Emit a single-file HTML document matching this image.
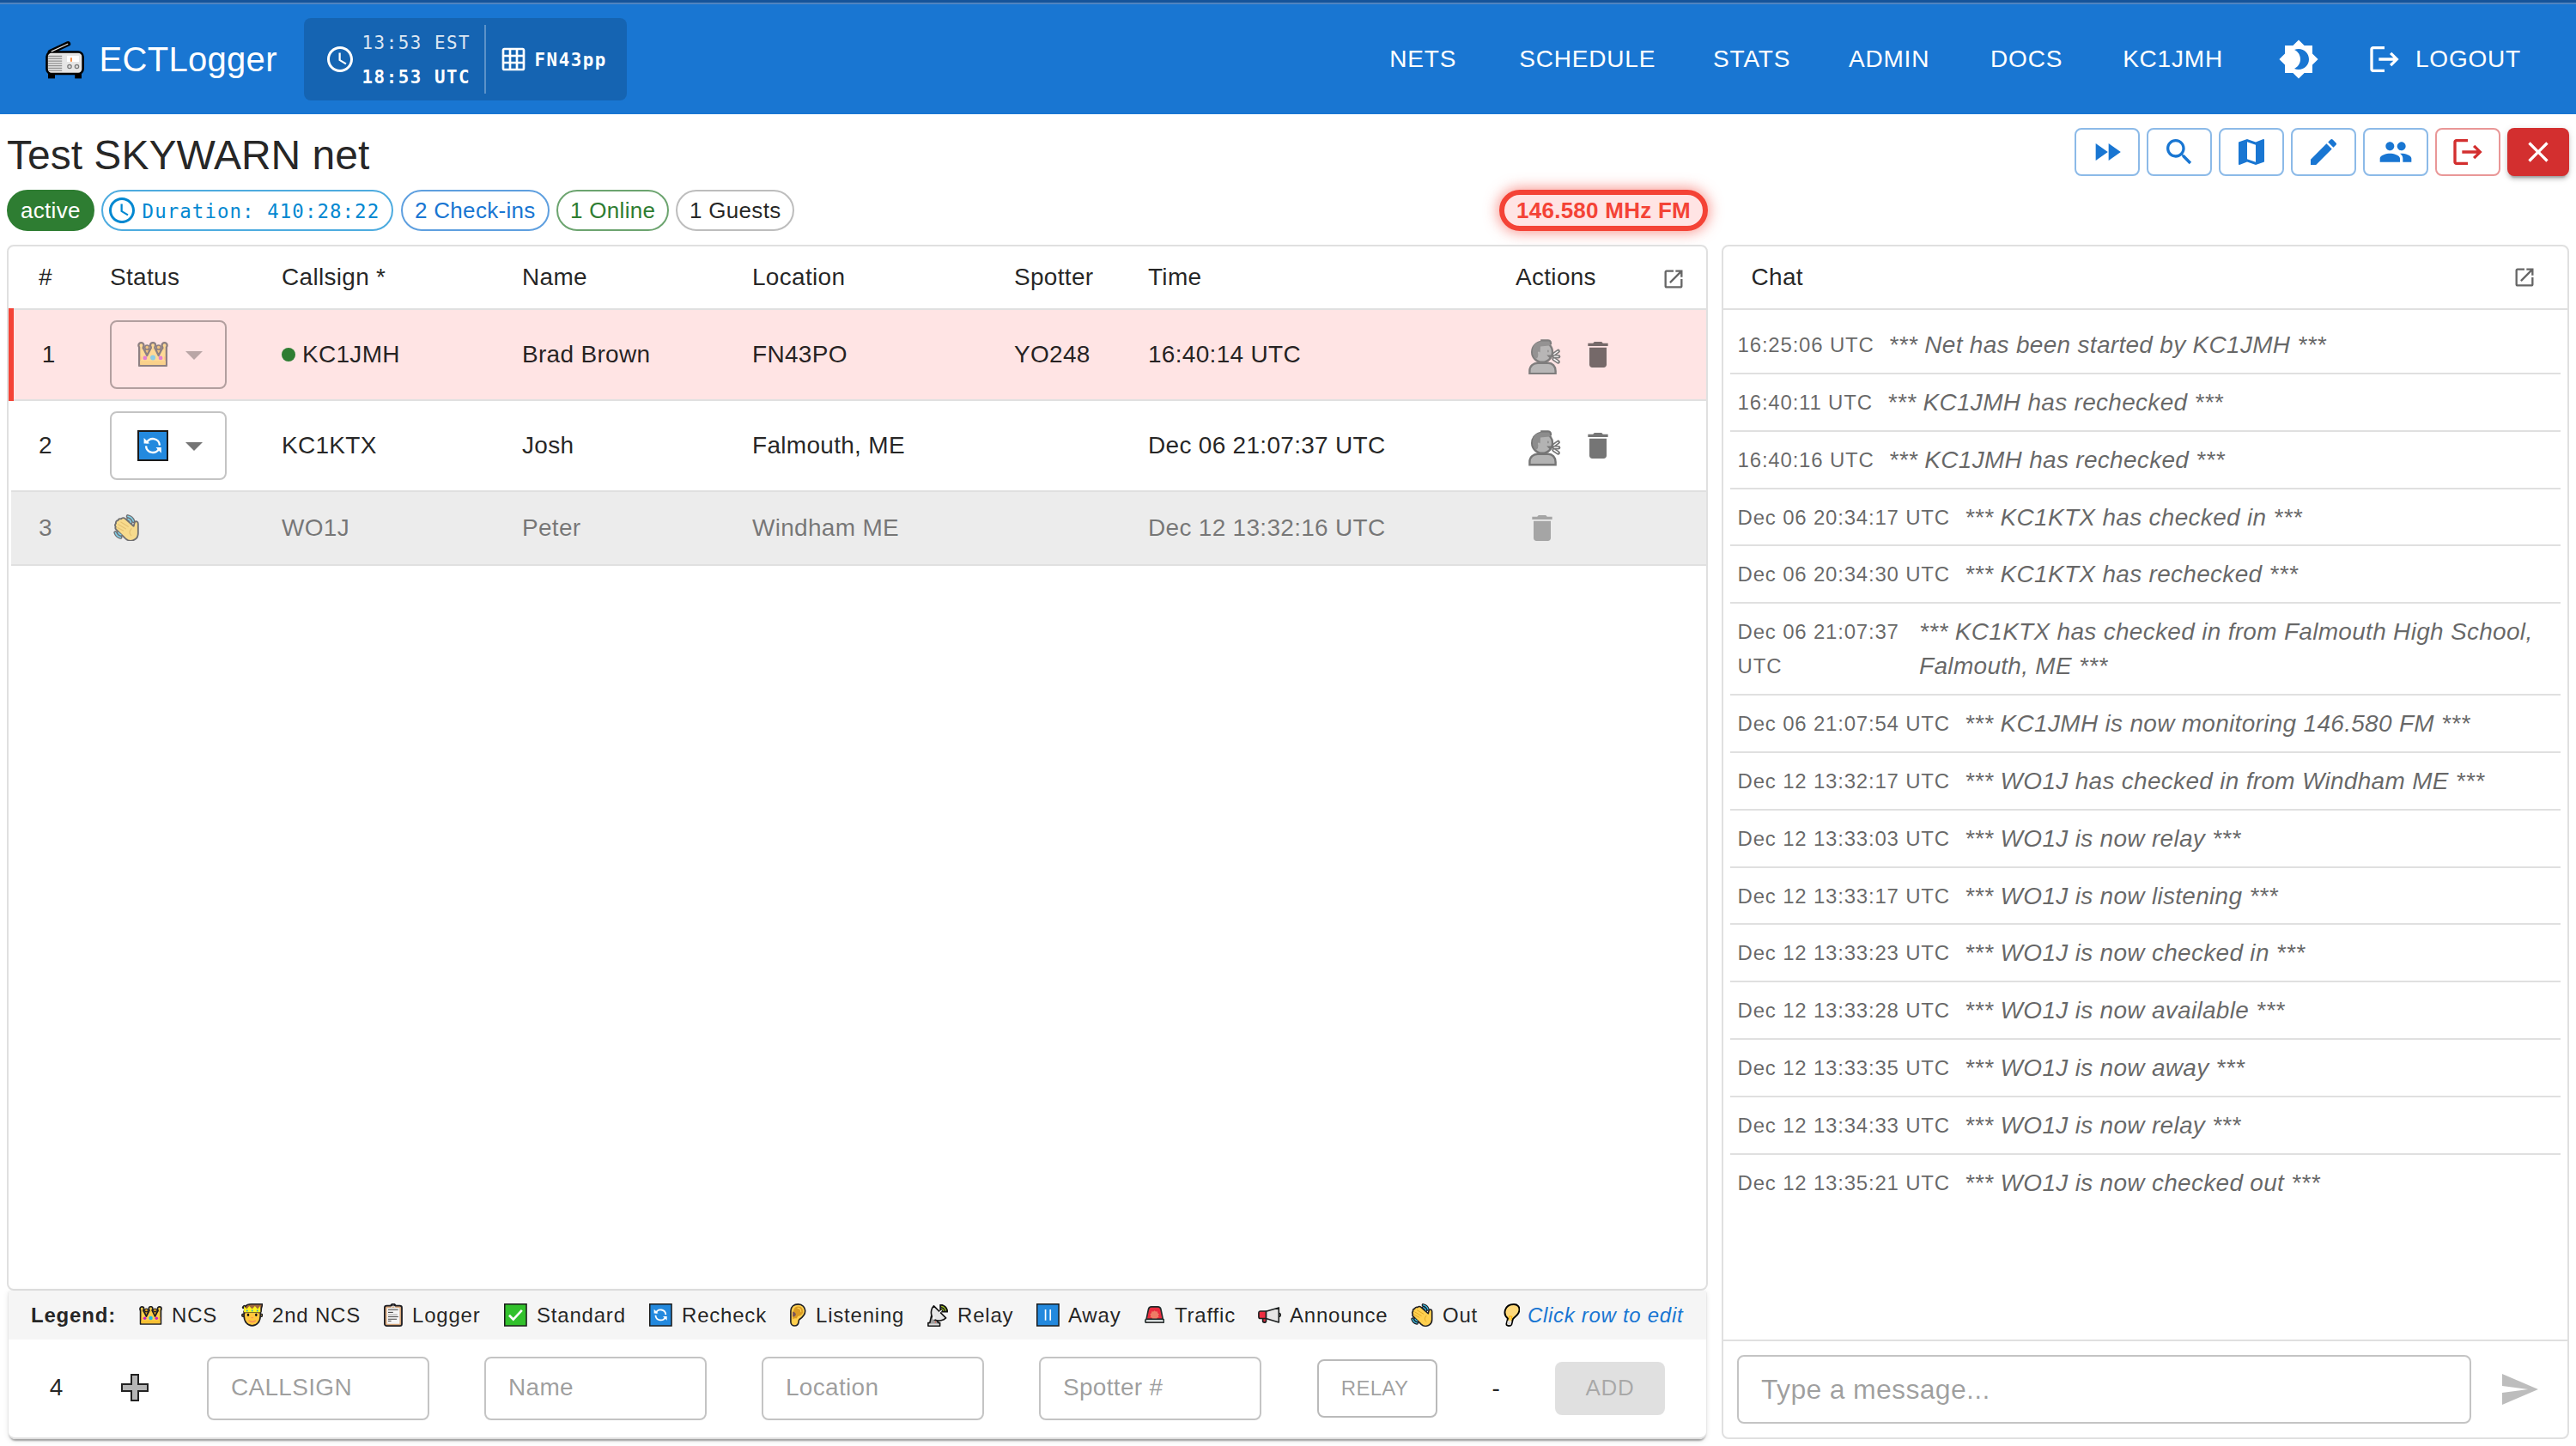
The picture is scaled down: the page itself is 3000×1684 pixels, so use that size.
<!DOCTYPE html>
<html lang="en">
<head>
<meta charset="utf-8">
<title>ECTLogger</title>
<style>
*{box-sizing:border-box;margin:0;padding:0}
html,body{width:3000px;height:1684px;overflow:hidden;background:#fff}
body{font-family:"Liberation Sans",Arial,sans-serif;color:rgba(0,0,0,.87);position:relative;font-size:28px}
.abs{position:absolute}
.mono{font-family:"DejaVu Sans Mono","Liberation Mono",monospace}
svg{display:block}
#appbar{position:absolute;left:0;top:0;width:3000px;height:133px;background:#1976d2}
#topstrip1{position:absolute;left:0;top:0;width:3000px;height:3px;background:#15549b}
#topstrip2{position:absolute;left:0;top:3px;width:3000px;height:2px;background:#4f84c0}
#brand{position:absolute;left:115.5px;top:46px;font-size:40px;line-height:46px;color:#fff;letter-spacing:.3px;white-space:nowrap}
#clockbox{position:absolute;left:354px;top:21px;width:376px;height:96px;border-radius:8px;background:rgba(0,0,0,.15)}
#clockbox .t{position:absolute;left:67.5px;font-size:20.8px;line-height:26px;letter-spacing:1.55px;color:#fff;white-space:nowrap}
#clockbox .div{position:absolute;left:210px;top:8px;width:2px;height:80px;background:rgba(255,255,255,.3)}
#nav{position:absolute;right:48px;top:32.5px;height:73px;display:flex;gap:32px;align-items:center}
.nb{min-width:128px;height:73px;padding:0 16px;display:flex;align-items:center;justify-content:center;color:#fff;font-size:28px;letter-spacing:.8px;white-space:nowrap}
.nb.ic{min-width:80px;width:80px;padding:0}
#title{position:absolute;left:8px;top:152.7px;font-size:48px;line-height:56px;white-space:nowrap;color:rgba(0,0,0,.87)}
.chip{position:absolute;top:221px;height:48px;border-radius:24px;font-size:26px;letter-spacing:.3px;line-height:44px;padding:0 14px;border:2px solid;white-space:nowrap;display:flex;align-items:center}
.ab{position:absolute;top:149px;width:76px;height:56px;border-radius:8px;border:2px solid rgba(25,118,210,.5);display:flex;align-items:center;justify-content:center}
#freq{position:absolute;left:1746px;top:221px;width:243px;height:48px;border-radius:24px;border:6px solid #f44336;background:#ffe4e4;color:#f44336;font-weight:bold;font-size:26px;letter-spacing:.25px;line-height:36px;text-align:center;box-shadow:0 0 16px 2px rgba(244,67,54,.55);white-space:nowrap}
#tcard{position:absolute;left:8px;top:285px;width:1981px;height:1218px;border:2px solid #e0e0e0;border-radius:8px;background:#fff;overflow:hidden}
.row{position:absolute;left:0;width:1977px;border-bottom:2px solid #e0e0e0}
.row span{position:absolute;font-size:28px;line-height:40px;white-space:nowrap;letter-spacing:.3px}
.sel{position:absolute;left:118px;width:136px;height:80px;border:2px solid rgba(0,0,0,.23);border-radius:8px}
.gray span{color:rgba(0,0,0,.5)}
#panel{position:absolute;left:10px;top:1503px;width:1977px;height:173px;background:#fff;border-radius:0 0 8px 8px;box-shadow:0 4px 2px -2px rgba(0,0,0,.2),0 2px 2px 0 rgba(0,0,0,.14),0 2px 6px 0 rgba(0,0,0,.12)}
#legend{position:absolute;left:0;top:0;width:1977px;height:57px;background:#f5f5f5}
#legend .sh,#inrow .sh{position:absolute;left:-2px;top:0;width:1px;height:1px}
#legend span{position:absolute;top:8.7px;font-size:24px;line-height:40px;white-space:nowrap;letter-spacing:.8px}
#inrow{position:absolute;left:0;top:57px;width:1977px;height:116px;background:#fff;border-radius:0 0 8px 8px;border-bottom:2px solid #e0e0e0}
.inp{position:absolute;top:20px;width:259px;height:74px;border:2px solid rgba(0,0,0,.23);border-radius:8px;font-size:28px;line-height:68px;padding-left:26px;color:rgba(0,0,0,.4);white-space:nowrap;letter-spacing:.3px}
#chat{position:absolute;left:2005px;top:285px;width:987px;height:1391px;border:2px solid #e0e0e0;border-radius:8px;background:#fff;overflow:hidden}
#chat .hd{position:absolute;left:0;top:0;width:983px;height:74px;border-bottom:2px solid #e0e0e0}
#chat .hd span{position:absolute;left:32.6px;top:15.8px;font-size:28px;line-height:40px;letter-spacing:.3px}
#list{position:absolute;left:8px;top:82px;width:967px}
.it{display:flex;padding:13px 8px 11.8px 8.6px;border-bottom:2px solid #e0e0e0;color:rgba(0,0,0,.6)}
.it:last-child{border-bottom:none}
.it .ts{font-size:24px;line-height:40.05px;letter-spacing:.8px;white-space:nowrap;margin-right:17px;flex:none}
.it .ms{font-size:28px;line-height:40.05px;font-style:italic;letter-spacing:.3px}
#cin{position:absolute;left:0;top:1273px;width:983px;height:113px;border-top:2px solid #e0e0e0}
</style>
</head>
<body>
<!-- APP BAR -->
<div id="appbar">
 <div id="topstrip1"></div><div id="topstrip2"></div>
 <div class="abs" id="radio" style="left:52px;top:47px;width:48px;height:46px">
  <svg width="48" height="46" viewBox="0 0 48 46"><path d="M6.6 13.6 L27.3 3.9" stroke="#000" stroke-width="5.8" stroke-linecap="round"/><rect x="4" y="39" width="8" height="5.4" fill="#000"/><rect x="35.2" y="39" width="7.8" height="5.4" fill="#000"/><rect x="2.5" y="13.5" width="42.1" height="25.5" rx="5.5" fill="#e6e6e6" stroke="#000" stroke-width="2.6"/><path d="M8.2 12.9 L26.8 4.2" stroke="#e4e4e4" stroke-width="1.2" stroke-linecap="round"/><g stroke="#8e8e8e" stroke-width="1.3"><path d="M4.2 18.5h16M4.2 21.3h16M4.2 24.06h16M4.2 26.8h16M4.2 29.6h16M4.2 32.4h16M4.2 35.2h16"/></g><rect x="26" y="18" width="14" height="7" fill="#fff"/><rect x="30.1" y="20.2" width="1.7" height="4.6" fill="#f57c2a"/><circle cx="29" cy="30.5" r="2.2" fill="#dcdcdc" stroke="#777" stroke-width="1.2"/><circle cx="37.5" cy="30.5" r="2.2" fill="#dcdcdc" stroke="#777" stroke-width="1.2"/></svg>
 </div>
 <div id="brand">ECTLogger</div>
 <div id="clockbox">
  <svg class="abs" style="left:24px;top:30px" width="36" height="36" viewBox="0 0 24 24" fill="#fff"><path d="M11.99 2C6.47 2 2 6.48 2 12s4.47 10 9.99 10C17.52 22 22 17.52 22 12S17.52 2 11.99 2zM12 20c-4.42 0-8-3.58-8-8s3.58-8 8-8 8 3.58 8 8-3.58 8-8 8z"/><path d="M12.5 7H11v6l5.25 3.15.75-1.23-4.5-2.67z"/></svg>
  <div class="t mono" style="top:15.5px;opacity:.85">13:53 EST</div>
  <div class="t mono" style="top:55.5px;font-weight:bold">18:53 UTC</div>
  <div class="div"></div>
  <svg class="abs" style="left:228px;top:32px" width="32" height="32" viewBox="0 0 24 24" fill="#fff"><path d="M20 2H4c-1.1 0-2 .9-2 2v16c0 1.1.9 2 2 2h16c1.1 0 2-.9 2-2V4c0-1.1-.9-2-2-2zM8 20H4v-4h4v4zm0-6H4v-4h4v4zm0-6H4V4h4v4zm6 12h-4v-4h4v4zm0-6h-4v-4h4v4zm0-6h-4V4h4v4zm6 12h-4v-4h4v4zm0-6h-4v-4h4v4zm0-6h-4V4h4v4z"/></svg>
  <div class="t mono" style="left:268.5px;top:36px;font-weight:bold">FN43pp</div>
 </div>
 <div id="nav">
  <div class="nb">NETS</div><div class="nb">SCHEDULE</div><div class="nb">STATS</div><div class="nb">ADMIN</div><div class="nb">DOCS</div><div class="nb">KC1JMH</div>
  <div class="nb ic"><svg width="48" height="48" viewBox="0 0 24 24" fill="#fff"><path d="M20 8.69V4h-4.69L12 .69 8.69 4H4v4.69L.69 12 4 15.31V20h4.69L12 23.31 15.31 20H20v-4.69L23.31 12 20 8.69zM12 18c-.89 0-1.74-.2-2.5-.55C11.56 16.5 13 14.42 13 12s-1.44-4.5-3.5-5.45C10.26 6.2 11.11 6 12 6c3.31 0 6 2.69 6 6s-2.69 6-6 6z"/></svg></div>
  <div class="nb"><svg style="margin-left:-8px;margin-right:16px" width="40" height="40" viewBox="0 0 24 24" fill="#fff"><path d="m17 7-1.41 1.41L18.17 11H8v2h10.17l-2.58 2.58L17 17l5-5zM4 5h8V3H4c-1.1 0-2 .9-2 2v14c0 1.1.9 2 2 2h8v-2H4V5z"/></svg>LOGOUT</div>
 </div>
</div>
<!-- TITLE ROW -->
<div id="title">Test SKYWARN net</div>
<div class="ab" style="left:2416px"><svg width="40" height="40" viewBox="0 0 24 24" fill="#1976d2"><path d="m4 18 8.5-6L4 6v12zm9-12v12l8.5-6L13 6z"/></svg></div>
<div class="ab" style="left:2500px"><svg width="40" height="40" viewBox="0 0 24 24" fill="#1976d2"><path d="M15.5 14h-.79l-.28-.27C15.41 12.59 16 11.11 16 9.5 16 5.91 13.09 3 9.5 3S3 5.91 3 9.5 5.91 16 9.5 16c1.61 0 3.09-.59 4.23-1.57l.27.28v.79l5 4.99L20.49 19l-4.99-5zm-6 0C7.01 14 5 11.99 5 9.5S7.01 5 9.5 5 14 7.01 14 9.5 11.99 14 9.5 14z"/></svg></div>
<div class="ab" style="left:2584px"><svg width="40" height="40" viewBox="0 0 24 24" fill="#1976d2"><path d="m20.5 3-.16.03L15 5.1 9 3 3.36 4.9c-.21.07-.36.25-.36.48V20.5c0 .28.22.5.5.5l.16-.03L9 18.9l6 2.1 5.64-1.9c.21-.07.36-.25.36-.48V3.5c0-.28-.22-.5-.5-.5zM15 19l-6-2.11V5l6 2.11V19z"/></svg></div>
<div class="ab" style="left:2668px"><svg width="40" height="40" viewBox="0 0 24 24" fill="#1976d2"><path d="M3 17.25V21h3.75L17.81 9.94l-3.75-3.75L3 17.25zM20.71 7.04c.39-.39.39-1.02 0-1.41l-2.34-2.34a.9959.9959 0 0 0-1.41 0l-1.83 1.83 3.75 3.75 1.83-1.83z"/></svg></div>
<div class="ab" style="left:2752px"><svg width="40" height="40" viewBox="0 0 24 24" fill="#1976d2"><path d="M16 11c1.66 0 2.99-1.34 2.99-3S17.66 5 16 5c-1.66 0-3 1.34-3 3s1.34 3 3 3zm-8 0c1.66 0 2.99-1.34 2.99-3S9.66 5 8 5C6.34 5 5 6.34 5 8s1.34 3 3 3zm0 2c-2.33 0-7 1.17-7 3.5V19h14v-2.5c0-2.33-4.67-3.5-7-3.5zm8 0c-.29 0-.62.02-.97.05 1.16.84 1.97 1.97 1.97 3.45V19h6v-2.5c0-2.33-4.67-3.5-7-3.5z"/></svg></div>
<div class="ab" style="left:2836px;border-color:rgba(211,47,47,.5)"><svg width="40" height="40" viewBox="0 0 24 24" fill="#d32f2f"><path d="m17 7-1.41 1.41L18.17 11H8v2h10.17l-2.58 2.58L17 17l5-5zM4 5h8V3H4c-1.1 0-2 .9-2 2v14c0 1.1.9 2 2 2h8v-2H4V5z"/></svg></div>
<div class="ab" style="left:2920px;width:72px;border:none;background:#d32f2f;box-shadow:0 6px 2px -4px rgba(0,0,0,.2),0 4px 4px 0 rgba(0,0,0,.14),0 2px 10px 0 rgba(0,0,0,.12)"><svg width="40" height="40" viewBox="0 0 24 24" fill="#fff"><path d="M19 6.41 17.59 5 12 10.59 6.41 5 5 6.41 10.59 12 5 17.59 6.41 19 12 13.41 17.59 19 19 17.59 13.41 12z"/></svg></div>
<!-- CHIPS -->
<div class="chip" style="left:8px;width:102px;background:#2e7d32;border-color:#2e7d32;color:#fff;padding:0 14px">active</div>
<div class="chip mono" style="left:118px;width:340px;border-color:rgba(2,136,209,.7);color:#0288d1;padding:0 0 0 3.6px;font-size:22.4px;letter-spacing:1.08px;line-height:44px"><svg width="36" height="36" viewBox="0 0 24 24" fill="#0288d1" style="margin-right:6px;flex:none"><path d="M11.99 2C6.47 2 2 6.48 2 12s4.47 10 9.99 10C17.52 22 22 17.52 22 12S17.52 2 11.99 2zM12 20c-4.42 0-8-3.58-8-8s3.58-8 8-8 8 3.58 8 8-3.58 8-8 8z"/><path d="M12.5 7H11v6l5.25 3.15.75-1.23-4.5-2.67z"/></svg><span style="position:relative;top:1.3px">Duration: 410:28:22</span></div>
<div class="chip" style="left:467px;width:173px;border-color:rgba(25,118,210,.7);color:#1976d2">2 Check-ins</div>
<div class="chip" style="left:648px;width:131px;border-color:rgba(46,125,50,.7);color:#2e7d32">1 Online</div>
<div class="chip" style="left:787px;width:138px;border-color:#bdbdbd;color:rgba(0,0,0,.87)">1 Guests</div>
<div id="freq">146.580 MHz FM</div>

<div id="tcard">
 <div class="row" style="top:0;height:74px">
  <span style="left:35px;top:15.5px">#</span><span style="left:118px;top:15.5px">Status</span><span style="left:318px;top:15.5px">Callsign *</span><span style="left:598px;top:15.5px">Name</span><span style="left:866px;top:15.5px">Location</span><span style="left:1171px;top:15.5px">Spotter</span><span style="left:1327px;top:15.5px">Time</span><span style="left:1755px;top:15.5px">Actions</span>
  <svg class="abs" style="left:1925px;top:24px" width="28" height="28" viewBox="0 0 24 24" fill="rgba(0,0,0,.6)"><path d="M19 19H5V5h7V3H5c-1.11 0-2 .9-2 2v14c0 1.1.89 2 2 2h14c1.1 0 2-.9 2-2v-7h-2v7zM14 3v2h3.59l-9.83 9.83 1.41 1.41L19 6.41V10h2V3h-7z"/></svg>
 </div>
 <div class="row" style="top:74px;height:106px;background:#ffe4e4">
  <span style="left:38.8px;top:32px">1</span>
  <div class="sel" style="top:12px;border-color:rgba(0,0,0,.3)"></div>
  <svg class="abs" style="left:150px;top:37.2px;opacity:.5" width="36" height="29.3" viewBox="0 0 27 22"><g stroke="#1d1d22" stroke-width="1.1" stroke-linejoin="round"><path d="M8.44,5.4 L11,8 L8.44,12.6 L5.9,8 Z M18.5,5.4 L21.1,8 L18.5,12.6 L16,8 Z" fill="#e2a21c"/><circle cx="8.44" cy="4.9" r="1.9" fill="#e2a21c"/><circle cx="18.5" cy="4.9" r="1.9" fill="#e2a21c"/></g><g stroke="#1d1d22" stroke-width="1.7" stroke-linejoin="round"><path d="M1.6,21 L1.6,5 L4.9,5 L8.44,12 L12,5 L15.1,5 L18.5,12 L22.1,5 L25.4,5 L25.4,21 Z" fill="#ffd04a"/><circle cx="3.3" cy="3.2" r="2.3" fill="#ffd04a"/><circle cx="13.55" cy="3.05" r="2.3" fill="#ffd04a"/><circle cx="23.7" cy="3.2" r="2.3" fill="#ffd04a"/></g><path d="M2.45,4.2h1.7v2.4h-1.7z M12.7,4h1.7v2.4h-1.7z M22.85,4.2h1.7v2.4h-1.7z" fill="#ffd04a"/><rect x="2.4" y="16.6" width="22.2" height="3.6" fill="#f7c035"/><circle cx="6.64" cy="14.2" r="1.8" fill="#c71fc4"/><circle cx="13.55" cy="13.95" r="2.25" fill="#1fb8e8"/><circle cx="20.3" cy="14.2" r="1.8" fill="#c71fc4"/><rect x="2.3" y="13" width="1" height="2.6" fill="#f57c2a"/><rect x="23.7" y="13" width="1" height="2.6" fill="#f57c2a"/></svg>
  <svg class="abs" style="left:192px;top:28px;opacity:.5" width="48" height="48" viewBox="0 0 24 24" fill="rgba(0,0,0,.54)"><path d="m7 10 5 5 5-5z"/></svg>
  <div class="abs" style="left:318px;top:44px;width:16px;height:16px;border-radius:8px;background:#2e7d32"></div>
  <span style="left:342px;top:32px">KC1JMH</span><span style="left:598px;top:32px">Brad Brown</span><span style="left:866px;top:32px">FN43PO</span><span style="left:1171px;top:32px">YO248</span><span style="left:1327px;top:32px">16:40:14 UTC</span>
  <svg class="abs" style="left:1770.2px;top:33.8px;opacity:.92" width="37.5" height="41.5" viewBox="0 0 37.5 41.5"><path d="M1.4,40.2 L1.4,37 C1.4,31 6,27.8 11,27.8 L23,27.8 C28,27.8 31.6,31.5 31.6,37 L31.6,40.2 Z" fill="#b3b3b3" stroke="#757575" stroke-width="2.4"/><circle cx="16.1" cy="14.9" r="11.9" fill="#b3b3b3" stroke="#757575" stroke-width="2.4"/><path d="M14.2,1.3 L23,1.3 C25.5,1.3 26.6,3.6 26,6.6 L24.4,7.6 L14,8.6 L13.6,15.4 C11.5,13.5 10.2,15 11.4,17.2 L11,21 L8.6,23.2 C3.6,18.6 3.6,9 8.4,5.2 C10,3.8 12,3.2 14,3 Z" fill="#8c8c8c"/><path d="M14.2,1.3 L23,1.3 C25.5,1.3 26.4,3.6 26,6.4" fill="none" stroke="#757575" stroke-width="2.2"/><ellipse cx="22.9" cy="14" rx="0.9" ry="1.4" fill="#8c8c8c"/><path d="M21.2,18.6 L28.4,18.6 L25.8,23.2 Z" fill="#757575"/><g stroke="#757575" stroke-width="4.6" stroke-linecap="round"><path d="M29.6,17.6 L34.6,14"/><path d="M30,20.2 L35,20.2"/><path d="M29.6,23 L34.6,26.4"/></g><g stroke="#fff" stroke-width="1.3" stroke-linecap="round"><path d="M29.8,17.5 L34.2,14.3"/><path d="M30.2,20.2 L34.6,20.2"/><path d="M29.8,23.1 L34.2,26.1"/></g></svg>
  <svg class="abs" style="left:1831px;top:32px;" width="40" height="40" viewBox="0 0 24 24"><path d="M6 19c0 1.1.9 2 2 2h8c1.1 0 2-.9 2-2V7H6v12zM19 4h-3.5l-1-1h-5l-1 1H5v2h14V4z" fill="rgba(0,0,0,.54)"/></svg>
 </div>
 <div class="abs" style="left:0;top:72px;width:6px;height:108px;background:#f44336"></div>
 <div class="abs" style="left:0;top:284px;width:3px;height:2px;background:#fff;z-index:2"></div>
 <div class="row" style="top:180px;height:106px">
  <span style="left:35px;top:32px">2</span>
  <div class="sel" style="top:12px"></div>
  <svg class="abs" style="left:150px;top:34px;" width="36" height="36" viewBox="0 0 36 36"><rect x="1" y="1" width="34" height="34" fill="#2389de" stroke="#1a1a1a" stroke-width="2"/><path d="M10.48,15.26 A8,8 0 0 1 25.99,17.58" fill="none" stroke="#fff" stroke-width="2.4"/><path d="M25.52,20.74 A8,8 0 0 1 10.01,18.42" fill="none" stroke="#fff" stroke-width="2.4"/><path d="M7.6,9 L7.6,15.6 L14.3,15.6 Z M27.8,20 L27.8,26.7 L21.5,20 Z" fill="#fff"/></svg>
  <svg class="abs" style="left:192px;top:28px" width="48" height="48" viewBox="0 0 24 24" fill="rgba(0,0,0,.54)"><path d="m7 10 5 5 5-5z"/></svg>
  <span style="left:318px;top:32px">KC1KTX</span><span style="left:598px;top:32px">Josh</span><span style="left:866px;top:32px">Falmouth, ME</span><span style="left:1327px;top:32px">Dec 06 21:07:37 UTC</span>
  <svg class="abs" style="left:1770.2px;top:34px;" width="37.5" height="41.5" viewBox="0 0 37.5 41.5"><path d="M1.4,40.2 L1.4,37 C1.4,31 6,27.8 11,27.8 L23,27.8 C28,27.8 31.6,31.5 31.6,37 L31.6,40.2 Z" fill="#b3b3b3" stroke="#757575" stroke-width="2.4"/><circle cx="16.1" cy="14.9" r="11.9" fill="#b3b3b3" stroke="#757575" stroke-width="2.4"/><path d="M14.2,1.3 L23,1.3 C25.5,1.3 26.6,3.6 26,6.6 L24.4,7.6 L14,8.6 L13.6,15.4 C11.5,13.5 10.2,15 11.4,17.2 L11,21 L8.6,23.2 C3.6,18.6 3.6,9 8.4,5.2 C10,3.8 12,3.2 14,3 Z" fill="#8c8c8c"/><path d="M14.2,1.3 L23,1.3 C25.5,1.3 26.4,3.6 26,6.4" fill="none" stroke="#757575" stroke-width="2.2"/><ellipse cx="22.9" cy="14" rx="0.9" ry="1.4" fill="#8c8c8c"/><path d="M21.2,18.6 L28.4,18.6 L25.8,23.2 Z" fill="#757575"/><g stroke="#757575" stroke-width="4.6" stroke-linecap="round"><path d="M29.6,17.6 L34.6,14"/><path d="M30,20.2 L35,20.2"/><path d="M29.6,23 L34.6,26.4"/></g><g stroke="#fff" stroke-width="1.3" stroke-linecap="round"><path d="M29.8,17.5 L34.2,14.3"/><path d="M30.2,20.2 L34.6,20.2"/><path d="M29.8,23.1 L34.2,26.1"/></g></svg>
  <svg class="abs" style="left:1831px;top:32px;" width="40" height="40" viewBox="0 0 24 24"><path d="M6 19c0 1.1.9 2 2 2h8c1.1 0 2-.9 2-2V7H6v12zM19 4h-3.5l-1-1h-5l-1 1H5v2h14V4z" fill="rgba(0,0,0,.54)"/></svg>
 </div>
 <div class="row gray" style="top:286px;left:3px;width:1974px;height:86px;background:#ececec">
  <span style="left:32px;top:21.5px">3</span>
  <svg class="abs" style="left:119px;top:25.6px;opacity:.6" width="30" height="31.153846153846153" viewBox="0 0 26 27"><g fill="none" stroke="#1d1d22" stroke-width="3.6" stroke-linecap="round"><path d="M14.6,1.9 A7.5,7.5 0 0 1 20.2,6.9"/><path d="M14.8,4.8 A4.6,4.6 0 0 1 17.8,8"/><path d="M2.1,18.4 A7,7 0 0 0 7.3,23.2"/><path d="M5.1,18.5 A4,4 0 0 0 7.6,20.6"/></g><path d="M20.5,11.9 L11.8,4.2 C10.5,3.2 8.8,3.5 8,4.6 C6.5,4 5,4.8 4.6,6.2 C3.2,6.2 2.2,7.6 2.6,9.2 C1.6,10 1.4,11.5 2.4,12.6 C1.8,13.6 2,14.6 2.8,15.3 L12.4,24.6 C15,27 19,27.2 22,25.2 C24.5,23.5 25,21 25,19 L25,9.5 C25,7.5 23,6.5 22,7.5 C21,8.5 21,10.5 20.5,11.9 Z" fill="#ffd04f" stroke="#1d1d22" stroke-width="1.6" stroke-linejoin="round"/><g fill="none" stroke="#3cc0e6" stroke-width="1.3" stroke-linecap="round"><path d="M14.6,1.9 A7.5,7.5 0 0 1 20.2,6.9"/><path d="M14.8,4.8 A4.6,4.6 0 0 1 17.8,8"/><path d="M2.1,18.4 A7,7 0 0 0 7.3,23.2"/><path d="M5.1,18.5 A4,4 0 0 0 7.6,20.6"/></g><g fill="none" stroke="#e0a826" stroke-width="1" stroke-linecap="round"><path d="M7.6,7.9 L15,12.4"/><path d="M5,10.2 L12.4,14.6"/><path d="M4.3,13.4 L10,16.5"/><path d="M18.3,14.4 C16,17 16,19.5 18,21.3"/></g></svg>
  <span style="left:315px;top:21.5px">WO1J</span><span style="left:595px;top:21.5px">Peter</span><span style="left:863px;top:21.5px">Windham ME</span><span style="left:1324px;top:21.5px">Dec 12 13:32:16 UTC</span>
  <svg class="abs" style="left:1763px;top:22px;" width="40" height="40" viewBox="0 0 24 24"><path d="M6 19c0 1.1.9 2 2 2h8c1.1 0 2-.9 2-2V7H6v12zM19 4h-3.5l-1-1h-5l-1 1H5v2h14V4z" fill="rgba(0,0,0,.3)"/></svg>
 </div>
</div>
<!-- LEGEND -->
<div id="panel">
<div id="legend"><div class="sh">
 <span style="left:28px;font-weight:bold">Legend:</span>
 <svg class="abs" style="left:154.2px;top:17.65px;" width="27" height="22" viewBox="0 0 27 22"><g stroke="#1d1d22" stroke-width="1.1" stroke-linejoin="round"><path d="M8.44,5.4 L11,8 L8.44,12.6 L5.9,8 Z M18.5,5.4 L21.1,8 L18.5,12.6 L16,8 Z" fill="#e2a21c"/><circle cx="8.44" cy="4.9" r="1.9" fill="#e2a21c"/><circle cx="18.5" cy="4.9" r="1.9" fill="#e2a21c"/></g><g stroke="#1d1d22" stroke-width="1.7" stroke-linejoin="round"><path d="M1.6,21 L1.6,5 L4.9,5 L8.44,12 L12,5 L15.1,5 L18.5,12 L22.1,5 L25.4,5 L25.4,21 Z" fill="#ffd04a"/><circle cx="3.3" cy="3.2" r="2.3" fill="#ffd04a"/><circle cx="13.55" cy="3.05" r="2.3" fill="#ffd04a"/><circle cx="23.7" cy="3.2" r="2.3" fill="#ffd04a"/></g><path d="M2.45,4.2h1.7v2.4h-1.7z M12.7,4h1.7v2.4h-1.7z M22.85,4.2h1.7v2.4h-1.7z" fill="#ffd04a"/><rect x="2.4" y="16.6" width="22.2" height="3.6" fill="#f7c035"/><circle cx="6.64" cy="14.2" r="1.8" fill="#c71fc4"/><circle cx="13.55" cy="13.95" r="2.25" fill="#1fb8e8"/><circle cx="20.3" cy="14.2" r="1.8" fill="#c71fc4"/><rect x="2.3" y="13" width="1" height="2.6" fill="#f57c2a"/><rect x="23.7" y="13" width="1" height="2.6" fill="#f57c2a"/></svg>
 <svg class="abs" style="left:272.65px;top:15px" width="25.6" height="27" viewBox="0 0 25.6 27"><g stroke="#1d1d22" stroke-width="1.6" stroke-linejoin="round"><circle cx="2.2" cy="13.7" r="1.4" fill="#ffc83d"/><circle cx="23.2" cy="13.7" r="1.4" fill="#ffc83d"/><path d="M3.2,9 L3.2,14.5 C3.2,21.5 7.5,25.9 12.7,25.9 C17.9,25.9 22.2,21.5 22.2,14.5 L22.2,9 Z" fill="#ffc83d"/><path d="M4.6,3.6 C6.5,0.9 9,0.8 12,0.8 L24.8,0.8 L23.4,5.6 L23,10 L3.4,10 Z" fill="#a0683e"/></g><path d="M2.4,4.6 L3.6,3.4" stroke="#1d1d22" stroke-width="3.2" stroke-linecap="round"/><path d="M3.1,10.2 L3.1,3 L6.4,6.5 L9.3,3 L12.6,6.5 L15.9,3 L19,6.5 L22,3 L22.3,10.2 Z" fill="#fff21f"/><circle cx="6.8" cy="8.5" r="0.9" fill="#1aa7d8"/><circle cx="12.7" cy="8.5" r="0.9" fill="#1aa7d8"/><circle cx="18.7" cy="8.5" r="0.9" fill="#1aa7d8"/><rect x="4" y="10.3" width="1.8" height="1.5" fill="#a0683e"/><rect x="19.6" y="10.3" width="1.8" height="1.5" fill="#a0683e"/><ellipse cx="8.0" cy="13.3" rx="1.2" ry="1.8" fill="#0b0b14"/><ellipse cx="17.3" cy="13.3" rx="1.2" ry="1.8" fill="#0b0b14"/><path d="M11.2,15.9 L14.2,15.9 L12.7,17.6 Z" fill="#f58a5b"/><path d="M8.9,20.2 Q12.7,22.6 16.5,20.2" stroke="#f58a5b" stroke-width="1.5" fill="none" stroke-linecap="round"/></svg>
 <svg class="abs" style="left:439.2px;top:15px" width="22" height="27.2" viewBox="0 0 22 27.2"><circle cx="10.9" cy="3.3" r="2.7" fill="#dcdcdc" stroke="#1d1d22" stroke-width="1.8"/><rect x="0.9" y="2.7" width="20.1" height="23.4" rx="2.4" fill="#d9a97c" stroke="#1d1d22" stroke-width="1.8"/><rect x="3.6" y="5.2" width="14.8" height="18.6" fill="#f4f4f4"/><path d="M8.2,5.4 C8.2,1.6 13.6,1.6 13.6,5.4 L16.6,5.4 L16.6,6.6 L5.2,6.6 L5.2,5.4 Z" fill="#dcdcdc"/><circle cx="10.9" cy="4.2" r="0.8" fill="#e58f3c"/><g stroke-width="1.1" stroke="#5a5a5a"><path d="M5,7.4h11.6"/><path d="M5,10.4h5.8" stroke="#444"/><path d="M5,13.1h10.8" stroke="#aaa"/><path d="M5,15.5h11.8" stroke="#555"/><path d="M5,18.3h10.1" stroke="#555"/><path d="M5,20.5h3.6" stroke="#555"/></g></svg>
 <svg class="abs" style="left:578.8px;top:15.2px;" width="26.8" height="26.8" viewBox="0 0 36 36"><rect x="1" y="1" width="34" height="34" fill="#32c12c" stroke="#1a1a1a" stroke-width="2"/><path d="M8,18.5 L14.5,25 L28,10.5" fill="none" stroke="#fff" stroke-width="3.6"/></svg>
 <svg class="abs" style="left:748.1px;top:15.2px;" width="26.8" height="26.8" viewBox="0 0 36 36"><rect x="1" y="1" width="34" height="34" fill="#2389de" stroke="#1a1a1a" stroke-width="2"/><path d="M10.48,15.26 A8,8 0 0 1 25.99,17.58" fill="none" stroke="#fff" stroke-width="2.4"/><path d="M25.52,20.74 A8,8 0 0 1 10.01,18.42" fill="none" stroke="#fff" stroke-width="2.4"/><path d="M7.6,9 L7.6,15.6 L14.3,15.6 Z M27.8,20 L27.8,26.7 L21.5,20 Z" fill="#fff"/></svg>
 <svg class="abs" style="left:912px;top:15.2px" width="18.6" height="27" viewBox="0 0 18.6 27"><path d="M0.9,9.5 C0.9,3.5 5,0.9 9.5,0.9 C14.5,0.9 17.7,4.5 17.7,9 C17.7,14 14,16.5 11,18.6 C10,19.4 10.3,20.5 10.1,21.6 C9.7,24.6 7.5,26 5.4,26 C2.8,26 0.9,24 0.9,21.6 Z" fill="#ffd04f" stroke="#1d1d22" stroke-width="1.6"/><path d="M3.2,18.5 C3.2,9 4,3.6 9.6,3.6 C13.6,3.6 15.2,6.8 15.2,9.4 C15.2,12.4 12.4,14 9.6,14.8 C8.4,15.4 8.6,17 7.4,17.6 C6,16.9 4.6,17.4 3.2,18.5 Z" fill="#d99b24"/><path d="M9,5.4 C11.4,5.6 12.8,7.4 12.7,9.6" fill="none" stroke="#ffd04f" stroke-width="1.1" stroke-linecap="round"/><path d="M3.1,9.6 C5.4,9.8 6.8,11.4 6.8,12.8 C6.8,14.3 5.4,15.6 3.1,15.6 Z" fill="#7a5658"/></svg>
 <svg class="abs" style="left:1072px;top:16px" width="24.4" height="26.2" viewBox="0 0 24.4 26.2"><g stroke="#111" stroke-width="1.6" stroke-linejoin="round"><path d="M4.6,13.8 L2.8,21.6 L0.9,21.6 L0.9,25.2 L14.6,25.2 L14.6,21.6 L12.7,21.6 L11.4,18.6 Z" fill="#9e9e9e"/><path d="M7.5,1.9 L21.6,15.9 C18.5,19 13.5,19.6 10.8,18.8 C8,18 5.4,16 5.2,13.6 C3.8,10.5 4.2,5.2 7.5,1.9 Z" fill="#e6e6e6"/><path d="M15.1,8.7 L15.1,0.5 C19.6,0.5 23.4,4.2 23.4,8.7 Z" fill="#1c1c28"/></g><rect x="1.8" y="22.6" width="11.9" height="1.7" fill="#dcdcdc"/><circle cx="7.5" cy="16" r="1.9" fill="#f2f2f2"/><rect x="8.9" y="19.8" width="1.2" height="1.7" fill="#e8604c"/><path d="M14.3,9.3 L16.3,7.4" stroke="#fff" stroke-width="1.4" stroke-linecap="round"/><path d="M16.2,5 A3.7,3.7 0 0 1 18.9,7.7 M16.2,2.4 A6.3,6.3 0 0 1 21.5,7.7" fill="none" stroke="#a4c81c" stroke-width="1.2"/></svg>
 <svg class="abs" style="left:1199.4px;top:15.2px;" width="26.8" height="26.8" viewBox="0 0 36 36"><rect x="1" y="1" width="34" height="34" fill="#2389de" stroke="#1a1a1a" stroke-width="2"/><path d="M14.2,9.5 V26.5 M21.8,9.5 V26.5" stroke="#fff" stroke-width="2.2"/></svg>
 <svg class="abs" style="left:1325px;top:17.6px" width="23.4" height="20.4" viewBox="0 0 23.4 20.4"><path d="M2,15.6 L4.4,4 C4.9,1.6 6,0.9 8,0.9 L15.4,0.9 C17.4,0.9 18.5,1.6 19,4 L21.4,15.6 Z" fill="#ea2d3f" stroke="#1f2a2a" stroke-width="1.6"/><path d="M11.6,5.2 L13,6.6 L15,6.2 L15.2,8.3 L17,9.4 L15.8,11 L16.6,13 L14.6,13.4 L14.2,15.4 L9,15.4 L8.6,13.4 L6.6,13 L7.4,11 L6.2,9.4 L8,8.3 L8.2,6.2 L10.2,6.6 Z" fill="#ee7d66"/><rect x="0.9" y="15.3" width="21.6" height="4.2" rx="1.6" fill="#d5dbdb" stroke="#1f2a2a" stroke-width="1.6"/><rect x="1.6" y="18.6" width="20.2" height="1.3" rx="0.6" fill="#333"/></svg>
 <svg class="abs" style="left:1457px;top:19px" width="27.2" height="19.2" viewBox="0 0 27.2 19.2"><g stroke="#1c1f1f" stroke-width="1.6" stroke-linejoin="round"><circle cx="24.2" cy="9.4" r="2.1" fill="#cfcfcf"/><path d="M5.6,13.2 L5.6,16.6 C5.6,18.6 9.6,18.6 9.6,16.6 L9.6,13.2 Z" fill="#d32f3f"/><path d="M9.4,5.2 L24.3,0.9 L24.3,18 L9.4,13.4 Z" fill="#e6e6e6"/><path d="M9.4,5 L2.9,5 C1.6,5 0.9,5.8 0.9,7 L0.9,11.4 C0.9,12.8 1.6,13.5 2.9,13.5 L9.4,13.5 Z" fill="#ed2d3f"/></g></svg>
 <svg class="abs" style="left:1635.3px;top:15px;" width="25.7" height="26.68846153846154" viewBox="0 0 26 27"><g fill="none" stroke="#1d1d22" stroke-width="3.6" stroke-linecap="round"><path d="M14.6,1.9 A7.5,7.5 0 0 1 20.2,6.9"/><path d="M14.8,4.8 A4.6,4.6 0 0 1 17.8,8"/><path d="M2.1,18.4 A7,7 0 0 0 7.3,23.2"/><path d="M5.1,18.5 A4,4 0 0 0 7.6,20.6"/></g><path d="M20.5,11.9 L11.8,4.2 C10.5,3.2 8.8,3.5 8,4.6 C6.5,4 5,4.8 4.6,6.2 C3.2,6.2 2.2,7.6 2.6,9.2 C1.6,10 1.4,11.5 2.4,12.6 C1.8,13.6 2,14.6 2.8,15.3 L12.4,24.6 C15,27 19,27.2 22,25.2 C24.5,23.5 25,21 25,19 L25,9.5 C25,7.5 23,6.5 22,7.5 C21,8.5 21,10.5 20.5,11.9 Z" fill="#ffd04f" stroke="#1d1d22" stroke-width="1.6" stroke-linejoin="round"/><g fill="none" stroke="#3cc0e6" stroke-width="1.3" stroke-linecap="round"><path d="M14.6,1.9 A7.5,7.5 0 0 1 20.2,6.9"/><path d="M14.8,4.8 A4.6,4.6 0 0 1 17.8,8"/><path d="M2.1,18.4 A7,7 0 0 0 7.3,23.2"/><path d="M5.1,18.5 A4,4 0 0 0 7.6,20.6"/></g><g fill="none" stroke="#e0a826" stroke-width="1" stroke-linecap="round"><path d="M7.6,7.9 L15,12.4"/><path d="M5,10.2 L12.4,14.6"/><path d="M4.3,13.4 L10,16.5"/><path d="M18.3,14.4 C16,17 16,19.5 18,21.3"/></g></svg>
 <svg class="abs" style="left:1742.8px;top:15px" width="19.6" height="27" viewBox="0 0 19.6 27"><path d="M3.4,24 L5,17.4 C2,15 0.9,11 2,7.5 C3.5,3 8,1 12,1 C16.5,1 19,4.2 18.4,8.2 C17.9,12.6 14.5,15 11.6,17.2 C10.6,18 10.6,19.5 10.1,21.5 L9.3,24.5 C8.2,26.6 3.4,26.4 3.4,24 Z" fill="#ffd97a" stroke="#000" stroke-width="1.9" stroke-linejoin="round"/><path d="M4.8,20 L9.6,21 L8.6,24.6 C7.4,25.6 4.6,25.4 4.2,23.8 Z" fill="#e8e8e8"/><path d="M4.6,21.6 L9,22.5 M4.4,23.2 L8.7,24" stroke="#c8c8c8" stroke-width="0.7"/><path d="M6.6,14.8 L7,18.8 M6.6,14.8 L9.8,15.2 L9,19" fill="none" stroke="#ffb300" stroke-width="1.1"/></svg>
 <span style="left:192px">NCS</span><span style="left:309px">2nd NCS</span><span style="left:472px">Logger</span><span style="left:617px">Standard</span><span style="left:786px">Recheck</span><span style="left:942px">Listening</span><span style="left:1107px">Relay</span><span style="left:1236px">Away</span><span style="left:1360px">Traffic</span><span style="left:1494px">Announce</span><span style="left:1672px">Out</span><span style="left:1771px;font-style:italic;color:#1976d2;letter-spacing:.7px">Click row to edit</span>
</div></div>
<div id="inrow"><div class="sh">
 <div class="abs" style="left:49.8px;top:36px;font-size:28px;line-height:40px">4</div>
 <svg class="abs" style="left:133.2px;top:40.2px" width="32" height="32" viewBox="0 0 32 32"><path d="M12,1 L20,1 L20,12 L31,12 L31,20 L20,20 L20,31 L12,31 L12,20 L1,20 L1,12 L12,12 Z" fill="#b5b5b5" stroke="#222" stroke-width="2"/></svg>
 <div class="inp" style="left:233px">CALLSIGN</div>
 <div class="inp" style="left:556px">Name</div>
 <div class="inp" style="left:879px">Location</div>
 <div class="inp" style="left:1202px">Spotter #</div>
 <div class="abs" style="left:1526px;top:23px;width:140px;height:68px;border:2px solid rgba(0,0,0,.27);border-radius:8px;font-size:24px;line-height:64px;text-align:center;padding-right:6px;color:rgba(0,0,0,.38);letter-spacing:.3px">RELAY</div>
 <div class="abs" style="left:1729.5px;top:37px;font-size:28px;line-height:40px">-</div>
 <div class="abs" style="left:1803px;top:26px;width:128px;height:62px;border-radius:8px;background:rgba(0,0,0,.12);font-size:26px;line-height:60px;text-align:center;color:rgba(0,0,0,.26);letter-spacing:.75px">ADD</div>
</div></div>
</div>
<div id="chat">
 <div class="hd"><span>Chat</span>
 <svg class="abs" style="left:918.8px;top:22px" width="28" height="28" viewBox="0 0 24 24" fill="rgba(0,0,0,.6)"><path d="M19 19H5V5h7V3H5c-1.11 0-2 .9-2 2v14c0 1.1.89 2 2 2h14c1.1 0 2-.9 2-2v-7h-2v7zM14 3v2h3.59l-9.83 9.83 1.41 1.41L19 6.41V10h2V3h-7z"/></svg></div>
 <div id="list">
  <div class="it"><div class="ts">16:25:06 UTC</div><div class="ms">*** Net has been started by KC1JMH ***</div></div>
  <div class="it"><div class="ts">16:40:11 UTC</div><div class="ms">*** KC1JMH has rechecked ***</div></div>
  <div class="it"><div class="ts">16:40:16 UTC</div><div class="ms">*** KC1JMH has rechecked ***</div></div>
  <div class="it"><div class="ts">Dec 06 20:34:17 UTC</div><div class="ms">*** KC1KTX has checked in ***</div></div>
  <div class="it"><div class="ts">Dec 06 20:34:30 UTC</div><div class="ms">*** KC1KTX has rechecked ***</div></div>
  <div class="it"><div class="ts" style="width:194.5px">Dec 06 21:07:37<br>UTC</div><div class="ms">*** KC1KTX has checked in from Falmouth High School, Falmouth, ME ***</div></div>
  <div class="it"><div class="ts">Dec 06 21:07:54 UTC</div><div class="ms">*** KC1JMH is now monitoring 146.580 FM ***</div></div>
  <div class="it"><div class="ts">Dec 12 13:32:17 UTC</div><div class="ms">*** WO1J has checked in from Windham ME ***</div></div>
  <div class="it"><div class="ts">Dec 12 13:33:03 UTC</div><div class="ms">*** WO1J is now relay ***</div></div>
  <div class="it"><div class="ts">Dec 12 13:33:17 UTC</div><div class="ms">*** WO1J is now listening ***</div></div>
  <div class="it"><div class="ts">Dec 12 13:33:23 UTC</div><div class="ms">*** WO1J is now checked in ***</div></div>
  <div class="it"><div class="ts">Dec 12 13:33:28 UTC</div><div class="ms">*** WO1J is now available ***</div></div>
  <div class="it"><div class="ts">Dec 12 13:33:35 UTC</div><div class="ms">*** WO1J is now away ***</div></div>
  <div class="it"><div class="ts">Dec 12 13:34:33 UTC</div><div class="ms">*** WO1J is now relay ***</div></div>
  <div class="it"><div class="ts">Dec 12 13:35:21 UTC</div><div class="ms">*** WO1J is now checked out ***</div></div>
 </div>
 <div id="cin">
  <div class="abs" style="left:16px;top:16px;width:855px;height:80px;border:2px solid rgba(0,0,0,.23);border-radius:8px;font-size:32px;line-height:76px;padding-left:26px;color:rgba(0,0,0,.38);letter-spacing:.3px">Type a message...</div>
  <svg class="abs" style="left:903px;top:32px" width="48" height="48" viewBox="0 0 24 24" fill="rgba(0,0,0,.26)"><path d="M2.01 21 23 12 2.01 3 2 10l15 2-15 2z"/></svg>
 </div>
</div>
</body>
</html>
